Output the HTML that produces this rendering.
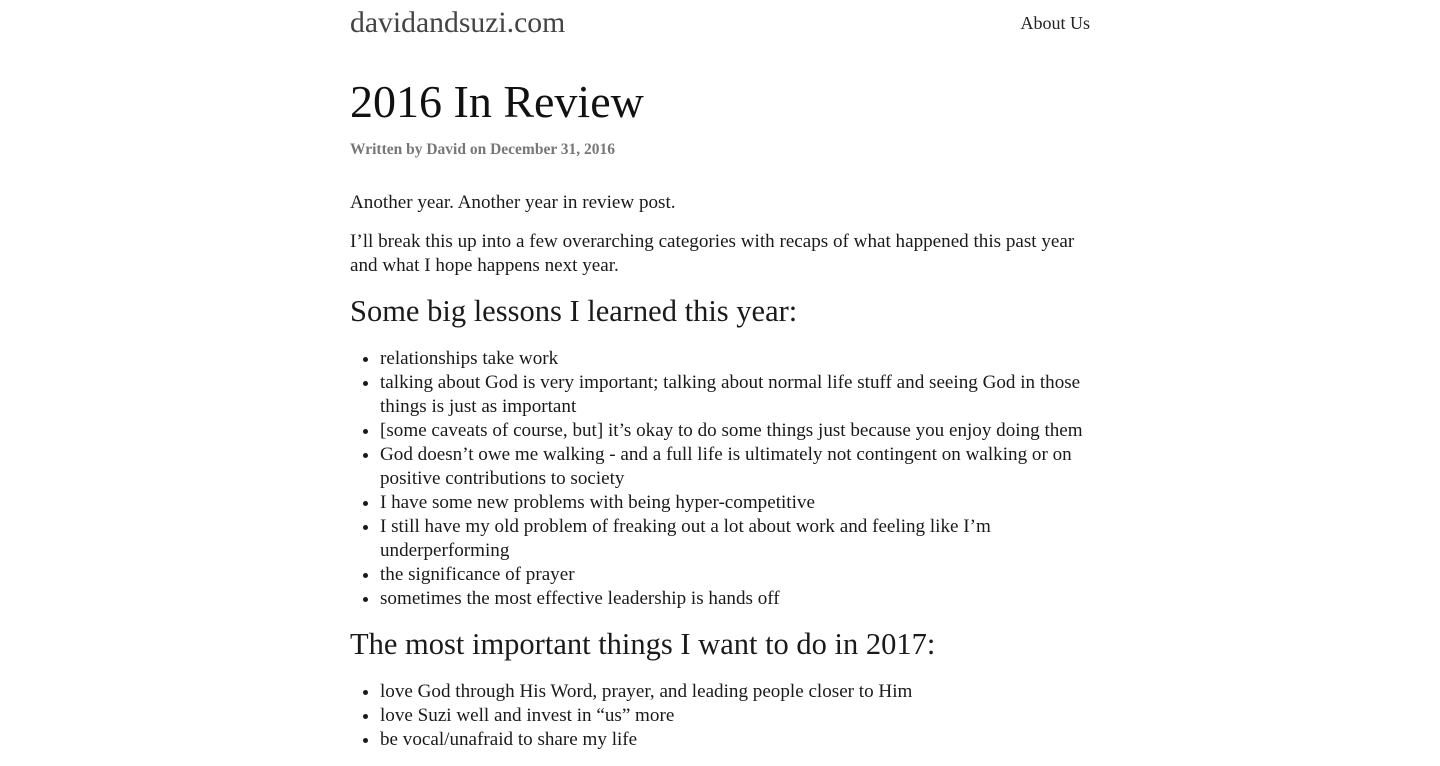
<!DOCTYPE html>
<html><head><meta charset="utf-8"><style>
body{margin:0;background:#fff;color:#1a1a1a;font-family:"Liberation Serif",serif;}
.w{width:740px;margin:0 auto;position:relative;}
.logo{position:absolute;left:0;top:5px;font-size:29.7px;color:#444;line-height:36px;}
.nav{position:absolute;right:0;top:13px;font-size:18px;color:#222;}
h1{position:absolute;top:74px;left:0;margin:0;font-size:46px;font-weight:normal;line-height:56px;color:#111;}
.meta{position:absolute;top:141px;left:0;font-size:15.5px;color:#777;font-weight:bold;}
.c{position:absolute;top:191px;left:0;width:740px;font-size:19.1px;line-height:24px;}
p{margin:0 0 15px}
h2{font-weight:normal;font-size:30.5px;line-height:34px;margin:16px 0 19px;}
ul{margin:0;padding-left:30px;}
</style></head><body><div class="w">
<div class="logo">davidandsuzi.com</div>
<div class="nav">About Us</div>
<h1>2016 In Review</h1>
<div class="meta">Written by David on December 31, 2016</div>
<div class="c">
<p>Another year. Another year in review post.</p>
<p>I’ll break this up into a few overarching categories with recaps of what happened this past year<br>and what I hope happens next year.</p>
<h2>Some big lessons I learned this year:</h2>
<ul>
<li>relationships take work</li>
<li>talking about God is very important; talking about normal life stuff and seeing God in those<br>things is just as important</li>
<li>[some caveats of course, but] it’s okay to do some things just because you enjoy doing them</li>
<li>God doesn’t owe me walking - and a full life is ultimately not contingent on walking or on<br>positive contributions to society</li>
<li>I have some new problems with being hyper-competitive</li>
<li>I still have my old problem of freaking out a lot about work and feeling like I’m<br>underperforming</li>
<li>the significance of prayer</li>
<li>sometimes the most effective leadership is hands off</li>
</ul>
<h2>The most important things I want to do in 2017:</h2>
<ul>
<li>love God through His Word, prayer, and leading people closer to Him</li>
<li>love Suzi well and invest in “us” more</li>
<li>be vocal/unafraid to share my life</li>
</ul>
</div></div></body></html>
